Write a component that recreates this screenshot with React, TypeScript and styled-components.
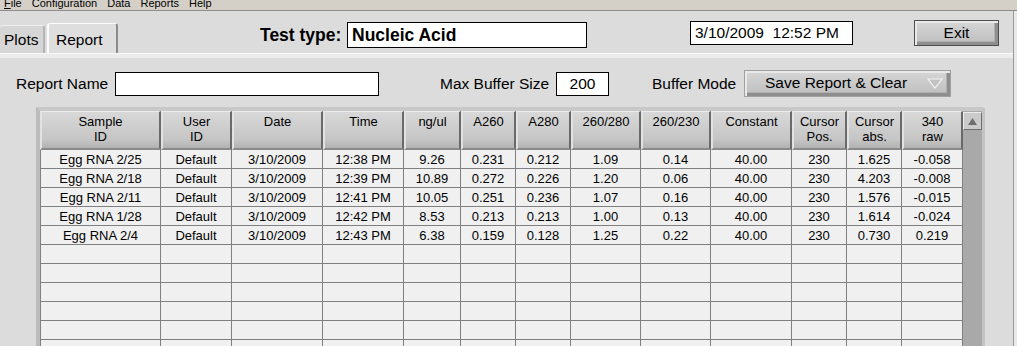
import styled, { createGlobalStyle } from "styled-components"

const GlobalStyle = createGlobalStyle`
    html, body {
        margin: 0;
        padding: 0;
        background: #e9e9e9;
        overflow: hidden;
    }
    * {
        box-sizing: border-box;
    }
`

const columns = [121, 71, 91, 81, 57, 55, 55, 70, 70, 81, 55, 55, 61]

const headers = [
    ["Sample", "ID"], ["User", "ID"], ["Date"], ["Time"], ["ng/ul"], ["A260"], ["A280"],
    ["260/280"], ["260/230"], ["Constant"], ["Cursor", "Pos."], ["Cursor", "abs."], ["340", "raw"],
]

const rows = [
    ["Egg RNA 2/25", "Default", "3/10/2009", "12:38 PM", "9.26", "0.231", "0.212", "1.09", "0.14", "40.00", "230", "1.625", "-0.058"],
    ["Egg RNA 2/18", "Default", "3/10/2009", "12:39 PM", "10.89", "0.272", "0.226", "1.20", "0.06", "40.00", "230", "4.203", "-0.008"],
    ["Egg RNA 2/11", "Default", "3/10/2009", "12:41 PM", "10.05", "0.251", "0.236", "1.07", "0.16", "40.00", "230", "1.576", "-0.015"],
    ["Egg RNA 1/28", "Default", "3/10/2009", "12:42 PM", "8.53", "0.213", "0.213", "1.00", "0.13", "40.00", "230", "1.614", "-0.024"],
    ["Egg RNA 2/4", "Default", "3/10/2009", "12:43 PM", "6.38", "0.159", "0.128", "1.25", "0.22", "40.00", "230", "0.730", "0.219"],
]

const EMPTY_ROWS = 7
const template = columns.map(w => `${w}px`).join(" ")

const App = () => {
    const allRows = [...rows, ...Array.from({ length: EMPTY_ROWS }, () => columns.map(() => ""))]

    return (
        <Window>
            <GlobalStyle />
            <MenuBar>
                <MenuItem><u>F</u>ile</MenuItem>
                <MenuItem>Configuration</MenuItem>
                <MenuItem>Data</MenuItem>
                <MenuItem>Reports</MenuItem>
                <MenuItem>Help</MenuItem>
            </MenuBar>
            <Main>
                <TopBar>
                    <TabStrip>
                        <Tab>Plots</Tab>
                        <Tab $active>Report</Tab>
                    </TabStrip>
                    <TestLabel>Test type:</TestLabel>
                    <TestBox>Nucleic Acid</TestBox>
                    <DateBox>3/10/2009&nbsp; 12:52 PM</DateBox>
                    <ExitButton>Exit</ExitButton>
                </TopBar>
                <Band />
                <ControlsRow>
                    <FieldLabel $left={16} $width={95}>Report Name</FieldLabel>
                    <InputBox $width={264} />
                    <FieldLabel $left={61} $width={112}>Max Buffer Size</FieldLabel>
                    <InputBox $width={53}>200</InputBox>
                    <FieldLabel $left={43} $width={88}>Buffer Mode</FieldLabel>
                    <Dropdown>
                        <span>Save Report &amp; Clear</span>
                        <svg width="16" height="11" viewBox="0 0 16 11">
                            <polygon points="1,1 15,1 8,10" fill="#c2c2c2" stroke="#f2f2f2" strokeWidth="1.2" />
                        </svg>
                    </Dropdown>
                </ControlsRow>
                <TableFrame>
                    <TableBody>
                        <HeaderRow $cols={template}>
                            {headers.map((h, i) => (
                                <HeaderCell key={i}>
                                    {h.map((line, j) => <div key={j}>{line}</div>)}
                                </HeaderCell>
                            ))}
                        </HeaderRow>
                        <BodyGrid $cols={template}>
                            {allRows.map((row, r) =>
                                row.map((value, c) => (
                                    <Cell key={`${r}-${c}`} $first={c === 0}>{value}</Cell>
                                ))
                            )}
                        </BodyGrid>
                    </TableBody>
                    <ScrollBar>
                        <ScrollUp>
                            <svg width="9" height="7" viewBox="0 0 9 7">
                                <polygon points="4.5,0 9,7 0,7" fill="#6e6e6e" />
                            </svg>
                        </ScrollUp>
                    </ScrollBar>
                </TableFrame>
            </Main>
        </Window>
    )
}

export default App

const Window = styled.div`
    width: 1017px;
    height: 346px;
    display: flex;
    flex-direction: column;
    overflow: hidden;
    font-family: "Liberation Sans", Arial, sans-serif;
    color: #000;
`

const MenuBar = styled.div`
    flex-shrink: 0;
    height: 11px;
    background: #d4d0c8;
    border-bottom: 1px solid #8c8c8c;
    display: flex;
    gap: 10px;
    padding-left: 4px;
    overflow: hidden;
`

const MenuItem = styled.span`
    font-size: 11px;
    line-height: 11px;
    margin-top: -2px;
    u {
        text-decoration: underline;
    }
`

const Main = styled.div`
    width: 1014px;
    flex: 1;
    min-height: 0;
    display: flex;
    flex-direction: column;
    background: #dcdcdc;
    border-right: 1px solid #9a9a9a;
    overflow: hidden;
`

const TopBar = styled.div`
    flex-shrink: 0;
    height: 42px;
    display: flex;
    align-items: flex-start;
`

const TabStrip = styled.div`
    align-self: flex-end;
    width: 118px;
    display: flex;
    align-items: flex-end;
    gap: 2px;
`

const Tab = styled.div<{ $active?: boolean }>`
    height: ${p => (p.$active ? 30 : 28)}px;
    padding: ${p => (p.$active ? "0 0 0 7px" : "0 0 0 4px")};
    font-size: 15.5px;
    line-height: ${p => (p.$active ? 32 : 28)}px;
    background: ${p => (p.$active ? "#dedede" : "#d6d6d6")};
    border-top: 1px solid ${p => (p.$active ? "#fbfbfb" : "#efefef")};
    border-left: ${p => (p.$active ? "2px solid #fbfbfb" : "none")};
    border-right: 2px solid ${p => (p.$active ? "#8a8a8a" : "#b4b4b4")};
    border-radius: 3px 3px 0 0;
    flex: ${p => (p.$active ? 1 : "none")};
    width: ${p => (p.$active ? "auto" : "45px")};
`

const TestLabel = styled.div`
    width: 83px;
    margin: 11px 0 0 142px;
    font-size: 17.5px;
    font-weight: bold;
    line-height: 26px;
    white-space: nowrap;
`

const TestBox = styled.div`
    width: 240px;
    height: 26px;
    margin: 11px 0 0 4px;
    padding-left: 4px;
    background: #fff;
    border: 1px solid #000;
    font-size: 17.5px;
    font-weight: bold;
    line-height: 24px;
`

const DateBox = styled.div`
    width: 163px;
    height: 24px;
    margin: 10px 0 0 103px;
    padding-left: 4px;
    background: #fff;
    border: 1px solid #000;
    font-size: 15.5px;
    line-height: 22px;
    white-space: nowrap;
`

const bevel = `
    background: linear-gradient(#d6d6d6, #bdbdbd);
    box-shadow: inset 2px 2px 0 #e9e9e9, inset -3px -3px 0 #8e8e8e, inset -4px -4px 0 #b0b0b0;
`

const ExitButton = styled.div`
    width: 85px;
    height: 26px;
    margin: 9px 0 0 61px;
    border: 1px solid #4e4e4e;
    ${bevel}
    font-size: 15.5px;
    line-height: 23px;
    text-align: center;
`

const Band = styled.div`
    flex-shrink: 0;
    height: 5px;
    background: #ececec;
    border-top: 1px solid #fafafa;
`

const ControlsRow = styled.div`
    flex-shrink: 0;
    height: 49px;
    display: flex;
    align-items: flex-start;
    padding-top: 14px;
`

const FieldLabel = styled.div<{ $left: number; $width: number }>`
    margin-left: ${p => p.$left}px;
    width: ${p => p.$width}px;
    margin-right: 4px;
    font-size: 15.5px;
    line-height: 24px;
    white-space: nowrap;
`

const InputBox = styled.div<{ $width: number }>`
    width: ${p => p.$width}px;
    height: 24px;
    background: #fff;
    border: 1px solid #000;
    font-size: 15.5px;
    line-height: 22px;
    text-align: center;
`

const Dropdown = styled.div`
    width: 207px;
    height: 27px;
    margin-top: -2px;
    display: flex;
    align-items: center;
    justify-content: space-between;
    padding: 0 7px 1px 20px;
    border: 1px solid #a0a0a0;
    ${bevel}
    font-size: 15.5px;
    svg {
        margin-top: 1px;
    }
`

const TableFrame = styled.div`
    flex: 1;
    min-height: 0;
    width: 949px;
    margin-left: 36px;
    display: flex;
    border-left: 4px solid #bcbcbc;
    border-top: 4px solid #c8c8c8;
    border-right: 3px solid #c4c4c4;
    border-top-right-radius: 3px;
    overflow: hidden;
`

const TableBody = styled.div`
    width: 923px;
    display: flex;
    flex-direction: column;
`

const HeaderRow = styled.div<{ $cols: string }>`
    flex-shrink: 0;
    display: grid;
    grid-template-columns: ${p => p.$cols};
    height: 39px;
`

const HeaderCell = styled.div`
    background: linear-gradient(#d8d8d8, #c6c6c6 75%, #b2b2b2);
    border-top: 1px solid #ececec;
    border-left: 2px solid #e2e2e2;
    border-right: 2px solid #6a6a6a;
    border-bottom: 2px solid #8a8a8a;
    font-size: 13px;
    line-height: 15px;
    text-align: center;
    padding-top: 2px;
`

const BodyGrid = styled.div<{ $cols: string }>`
    flex-shrink: 0;
    display: grid;
    grid-template-columns: ${p => p.$cols};
    grid-auto-rows: 19px;
    background: #f0f0f0;
`

const Cell = styled.div<{ $first?: boolean }>`
    border-right: 1px solid #808080;
    border-bottom: 1px solid #808080;
    border-left: ${p => (p.$first ? "1px solid #808080" : "none")};
    font-size: 13px;
    line-height: 20px;
    text-align: center;
    white-space: nowrap;
    overflow: hidden;
`

const ScrollBar = styled.div`
    width: 19px;
    background: #a9a9a9;
    padding-top: 1px;
`

const ScrollUp = styled.div`
    height: 18px;
    display: flex;
    align-items: center;
    justify-content: center;
    background: #cbcbcb;
    border-top: 1px solid #ececec;
    border-left: 1px solid #ececec;
    border-right: 1px solid #707070;
    border-bottom: 1px solid #707070;
`
